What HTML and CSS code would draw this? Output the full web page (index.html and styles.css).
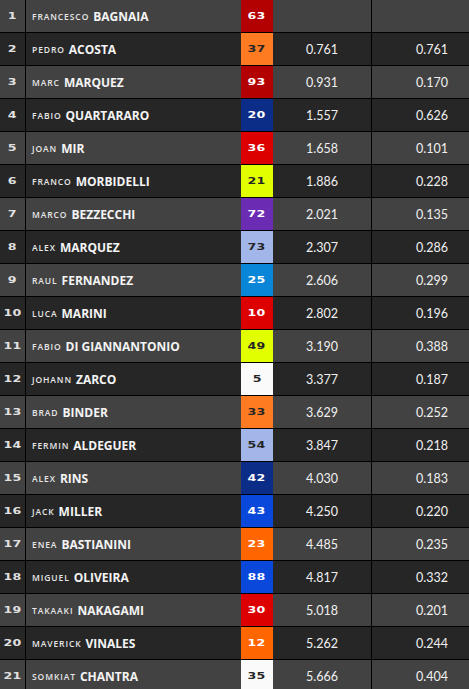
FILE: index.html
```html
<!DOCTYPE html>
<html>
<head>
<meta charset="utf-8">
<link rel="stylesheet" href="styles.css">
</head>
<body>
<div class="table">
  <div class="row light"><div class="pos"><span class="wide">1</span></div><div class="name"><span class="first">FRANCESCO</span><span class="last">BAGNAIA</span></div><div class="num red-d"><span class="wide">63</span></div><div class="t1"></div><div class="t2"></div></div>
  <div class="row dark"><div class="pos"><span class="wide">2</span></div><div class="name"><span class="first">PEDRO</span><span class="last">ACOSTA</span></div><div class="num orange dk"><span class="wide">37</span></div><div class="t1">0.761</div><div class="t2">0.761</div></div>
  <div class="row light"><div class="pos"><span class="wide">3</span></div><div class="name"><span class="first">MARC</span><span class="last">MARQUEZ</span></div><div class="num red-d"><span class="wide">93</span></div><div class="t1">0.931</div><div class="t2">0.170</div></div>
  <div class="row dark"><div class="pos"><span class="wide">4</span></div><div class="name"><span class="first">FABIO</span><span class="last">QUARTARARO</span></div><div class="num navy"><span class="wide">20</span></div><div class="t1">1.557</div><div class="t2">0.626</div></div>
  <div class="row light"><div class="pos"><span class="wide">5</span></div><div class="name"><span class="first">JOAN</span><span class="last">MIR</span></div><div class="num red"><span class="wide">36</span></div><div class="t1">1.658</div><div class="t2">0.101</div></div>
  <div class="row dark"><div class="pos"><span class="wide">6</span></div><div class="name"><span class="first">FRANCO</span><span class="last">MORBIDELLI</span></div><div class="num yellow dk"><span class="wide">21</span></div><div class="t1">1.886</div><div class="t2">0.228</div></div>
  <div class="row light"><div class="pos"><span class="wide">7</span></div><div class="name"><span class="first">MARCO</span><span class="last">BEZZECCHI</span></div><div class="num purple"><span class="wide">72</span></div><div class="t1">2.021</div><div class="t2">0.135</div></div>
  <div class="row dark"><div class="pos"><span class="wide">8</span></div><div class="name"><span class="first">ALEX</span><span class="last">MARQUEZ</span></div><div class="num lblue dk"><span class="wide">73</span></div><div class="t1">2.307</div><div class="t2">0.286</div></div>
  <div class="row light"><div class="pos"><span class="wide">9</span></div><div class="name"><span class="first">RAUL</span><span class="last">FERNANDEZ</span></div><div class="num sky"><span class="wide">25</span></div><div class="t1">2.606</div><div class="t2">0.299</div></div>
  <div class="row dark"><div class="pos"><span class="wide">10</span></div><div class="name"><span class="first">LUCA</span><span class="last">MARINI</span></div><div class="num red"><span class="wide">10</span></div><div class="t1">2.802</div><div class="t2">0.196</div></div>
  <div class="row light"><div class="pos"><span class="wide">11</span></div><div class="name"><span class="first">FABIO</span><span class="last">DI GIANNANTONIO</span></div><div class="num yellow dk"><span class="wide">49</span></div><div class="t1">3.190</div><div class="t2">0.388</div></div>
  <div class="row dark"><div class="pos"><span class="wide">12</span></div><div class="name"><span class="first">JOHANN</span><span class="last">ZARCO</span></div><div class="num white dk"><span class="wide">5</span></div><div class="t1">3.377</div><div class="t2">0.187</div></div>
  <div class="row light"><div class="pos"><span class="wide">13</span></div><div class="name"><span class="first">BRAD</span><span class="last">BINDER</span></div><div class="num orange dk"><span class="wide">33</span></div><div class="t1">3.629</div><div class="t2">0.252</div></div>
  <div class="row dark"><div class="pos"><span class="wide">14</span></div><div class="name"><span class="first">FERMIN</span><span class="last">ALDEGUER</span></div><div class="num lblue dk"><span class="wide">54</span></div><div class="t1">3.847</div><div class="t2">0.218</div></div>
  <div class="row light"><div class="pos"><span class="wide">15</span></div><div class="name"><span class="first">ALEX</span><span class="last">RINS</span></div><div class="num navy"><span class="wide">42</span></div><div class="t1">4.030</div><div class="t2">0.183</div></div>
  <div class="row dark"><div class="pos"><span class="wide">16</span></div><div class="name"><span class="first">JACK</span><span class="last">MILLER</span></div><div class="num blue"><span class="wide">43</span></div><div class="t1">4.250</div><div class="t2">0.220</div></div>
  <div class="row light"><div class="pos"><span class="wide">17</span></div><div class="name"><span class="first">ENEA</span><span class="last">BASTIANINI</span></div><div class="num orange2"><span class="wide">23</span></div><div class="t1">4.485</div><div class="t2">0.235</div></div>
  <div class="row dark"><div class="pos"><span class="wide">18</span></div><div class="name"><span class="first">MIGUEL</span><span class="last">OLIVEIRA</span></div><div class="num blue"><span class="wide">88</span></div><div class="t1">4.817</div><div class="t2">0.332</div></div>
  <div class="row light"><div class="pos"><span class="wide">19</span></div><div class="name"><span class="first">TAKAAKI</span><span class="last">NAKAGAMI</span></div><div class="num red"><span class="wide">30</span></div><div class="t1">5.018</div><div class="t2">0.201</div></div>
  <div class="row dark"><div class="pos"><span class="wide">20</span></div><div class="name"><span class="first">MAVERICK</span><span class="last">VINALES</span></div><div class="num orange2"><span class="wide">12</span></div><div class="t1">5.262</div><div class="t2">0.244</div></div>
  <div class="row light"><div class="pos"><span class="wide">21</span></div><div class="name"><span class="first">SOMKIAT</span><span class="last">CHANTRA</span></div><div class="num white dk"><span class="wide">35</span></div><div class="t1">5.666</div><div class="t2">0.404</div></div>
</div>
</body>
</html>
```
FILE: styles.css
```css
html, body {
  margin: 0;
  padding: 0;
  background: #262626;
  overflow: hidden;
}
.table {
  width: 469px;
}
.row {
  display: grid;
  grid-template-columns: 26px 215px 32px 99px 1fr;
  height: 33px;
  box-sizing: border-box;
  border-bottom: 1px solid #000;
  color: #f2f2f2;
}
.row.light { background: #424242; }
.row.dark { background: #262626; }
.row > div {
  display: flex;
  align-items: center;
  min-width: 0;
}
.pos {
  border-right: 1px solid #000;
  justify-content: center;
  color: #e0e0e0;
}
.wide {
  font-family: "DejaVu Sans", sans-serif;
  font-weight: 700;
  font-size: 9px;
  display: inline-block;
  transform: scaleX(1.4);
  letter-spacing: 0.3px;
}
.name {
  padding-left: 6px;
  font-family: "Open Sans", sans-serif;
  white-space: nowrap;
  gap: 4px;
}
.first {
  font-family: "Open Sans", sans-serif;
  font-weight: 600;
  font-size: 8.5px;
  letter-spacing: 0.9px;
  color: #e6e6e6;
  padding-top: 1px;
}
.last {
  font-size: 12px;
  font-weight: 700;
  color: #f4f4f4;
}
.num {
  justify-content: center;
  color: #ffffff;
}
.num.dk { color: #262626; }
.red-d { background: #b30000; }
.red { background: #dc0000; }
.orange { background: #ff7b22; }
.orange2 { background: #ff6600; }
.navy { background: #0b2d87; }
.yellow { background: #e2ff00; }
.purple { background: #6b2bb3; }
.lblue { background: #a2b6ea; }
.sky { background: #0a86d8; }
.white { background: #fafafa; }
.blue { background: #0a48dc; }
.t1, .t2 {
  justify-content: center;
  font-family: Lato, sans-serif;
  font-size: 12.5px;
  color: #f0f0f0;
}
.t1 {
  border-right: 1px solid #000;
}
.t2 {
  padding-left: 23px;
}
```
